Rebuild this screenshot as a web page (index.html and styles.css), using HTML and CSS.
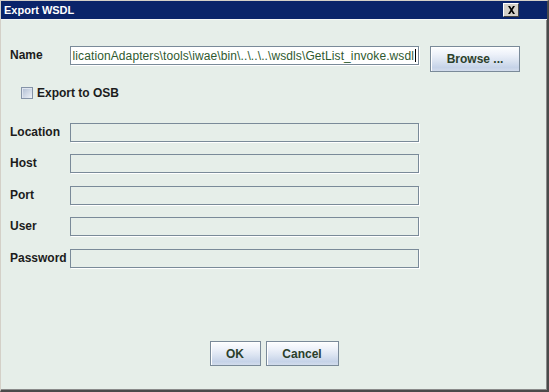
FILE: index.html
```html
<!DOCTYPE html>
<html>
<head>
  <title>Export WSDL</title>
  <meta charset="UTF-8">
  <link rel="stylesheet" href="styles.css">
</head>
<body>
  <div class="dialog">
    <div class="titlebar">
      <span class="title">Export WSDL</span>
      <span class="close">
        <svg width="9" height="8" viewBox="0 0 9 8"><path d="M1 0h2l1.5 2.5L6 0h2L5.5 4 8 8H6L4.5 5.5 3 8H1l2.5-4z" fill="#000"/></svg>
      </span>
    </div>

    <div class="content">
      <div class="row name-row">
        <label class="label">Name</label>
        <div class="field field-active">
          <span class="value">licationAdapters\tools\iwae\bin\..\..\..\wsdls\GetList_invoke.wsdl</span><span class="caret"></span>
        </div>
        <button class="btn browse">Browse ...</button>
      </div>

      <div class="check-row">
        <span class="checkbox"></span>
        <span class="check-label">Export to OSB</span>
      </div>

      <div class="osb">
        <div class="row"><label class="label">Location</label><div class="field"></div></div>
        <div class="row"><label class="label">Host</label><div class="field"></div></div>
        <div class="row"><label class="label">Port</label><div class="field"></div></div>
        <div class="row"><label class="label">User</label><div class="field"></div></div>
        <div class="row"><label class="label">Password</label><div class="field"></div></div>
      </div>

      <div class="footer">
        <button class="btn ok">OK</button>
        <button class="btn cancel">Cancel</button>
      </div>
    </div>
  </div>
</body>
</html>
```

FILE: styles.css
```css
body {
  margin: 0;
  font-family: "Liberation Sans", Arial, sans-serif;
  background: #e6eee9;
}

.dialog {
  width: 549px;
  height: 392px;
  box-sizing: border-box;
  display: flex;
  flex-direction: column;
  background: #e6eee9;
  border-top: 1px solid #d4d0c8;
  border-left: 1px solid #d4d0c8;
  border-right: 2px solid #4a4a4a;
  border-bottom: 2px solid #4a4a4a;
  box-shadow: inset -1px -1px 0 #8a8a8a;
}

.titlebar {
  height: 18px;
  background: #0a246a;
  color: #fff;
  display: flex;
  align-items: center;
  justify-content: space-between;
  padding: 0 28px 0 3px;
  border-bottom: 1px solid #f4f6f5;
}

.title {
  font-size: 11px;
  font-weight: bold;
}

.close {
  width: 14px;
  height: 12px;
  background: #d4d0c8;
  border: 1px solid;
  border-color: #fff #404040 #404040 #fff;
  display: flex;
  align-items: center;
  justify-content: center;
}

.content {
  flex: 1;
  display: flex;
  flex-direction: column;
  padding: 26px 0 0 9px;
}

.row {
  display: flex;
  align-items: flex-start;
}

.label {
  width: 60px;
  height: 19px;
  line-height: 19px;
  font-size: 12px;
  font-weight: bold;
  color: #1c1c1c;
  flex-shrink: 0;
}

.field {
  width: 349px;
  height: 19px;
  box-sizing: border-box;
  border: 1px solid #7a8a99;
  box-shadow: 1px 1px 0 #fff;
  background: #e6eee9;
}

.field-active {
  background: #fff;
  overflow: hidden;
  display: flex;
  justify-content: flex-end;
  align-items: center;
  padding-right: 2px;
  white-space: nowrap;
  font-size: 12px;
  color: #2f5a2f;
}

.value {
  letter-spacing: 0.1px;
}

.caret {
  width: 1px;
  height: 13px;
  background: #000;
  flex-shrink: 0;
  margin-left: 1px;
}

.btn {
  font-family: "Liberation Sans", Arial, sans-serif;
  font-size: 12px;
  font-weight: bold;
  color: #2b3f2b;
  border: 1px solid #7a8a99;
  background: linear-gradient(#fdfeff 0%, #eef2fa 30%, #dde5f2 55%, #c6d3e8 85%, #d2dcec 100%);
  box-shadow: inset 1px 1px 0 #fff;
  padding: 0;
  height: 26px;
}

.browse {
  width: 90px;
  margin-left: 11px;
}

.check-row {
  display: flex;
  align-items: center;
  margin: 15px 0 0 11px;
  height: 12px;
}

.checkbox {
  width: 12px;
  height: 12px;
  box-sizing: border-box;
  border: 1px solid #8593a8;
  background: linear-gradient(135deg, #aebcd2, #eef2f8);
  box-shadow: inset 1px 1px 0 #dfe5ef;
}

.check-label {
  margin-left: 4px;
  font-size: 12px;
  font-weight: bold;
  color: #1c1c1c;
}

.osb {
  display: flex;
  flex-direction: column;
  margin-top: 24px;
}

.osb .row + .row {
  margin-top: 12px;
}

.osb .row:nth-child(3),
.osb .row:nth-child(5) {
  margin-top: 13px;
}

.footer {
  margin-top: auto;
  display: flex;
  justify-content: center;
  gap: 5px;
  padding: 0 0 24px 0;
  margin-left: -9px;
}

.ok {
  width: 51px;
  height: 25px;
}

.cancel {
  width: 73px;
  height: 25px;
}
```
